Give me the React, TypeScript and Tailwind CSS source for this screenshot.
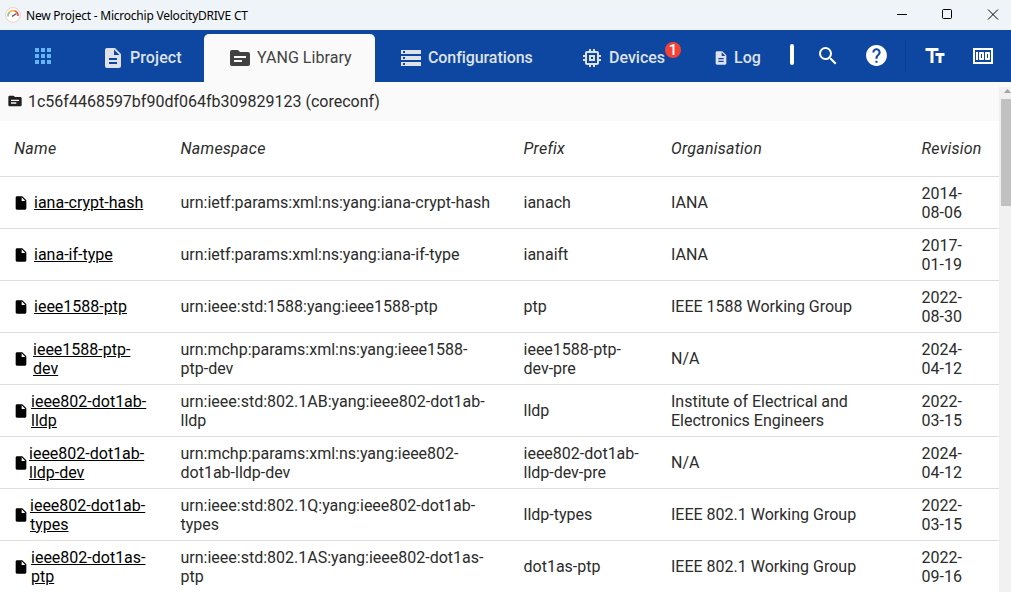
import React from "react";
import {
  MdApps,
  MdDescription,
  MdHelp,
  MdInsertDriveFile,
  MdMemory,
  MdMoney,
  MdSearch,
  MdSource,
  MdStorage,
  MdTextFields,
} from "react-icons/md";

type Module = {
  name: string[];
  gap: string;
  namespace: string[];
  prefix: string[];
  organisation: string[];
  revision: string[];
};

const modules: Module[] = [
  { name: ["iana-crypt-hash"], gap: "w-5", namespace: ["urn:ietf:params:xml:ns:yang:iana-crypt-hash"], prefix: ["ianach"], organisation: ["IANA"], revision: ["2014-", "08-06"] },
  { name: ["iana-if-type"], gap: "w-5", namespace: ["urn:ietf:params:xml:ns:yang:iana-if-type"], prefix: ["ianaift"], organisation: ["IANA"], revision: ["2017-", "01-19"] },
  { name: ["ieee1588-ptp"], gap: "w-5", namespace: ["urn:ieee:std:1588:yang:ieee1588-ptp"], prefix: ["ptp"], organisation: ["IEEE 1588 Working Group"], revision: ["2022-", "08-30"] },
  { name: ["ieee1588-ptp-", "dev"], gap: "w-[19px]", namespace: ["urn:mchp:params:xml:ns:yang:ieee1588-", "ptp-dev"], prefix: ["ieee1588-ptp-", "dev-pre"], organisation: ["N/A"], revision: ["2024-", "04-12"] },
  { name: ["ieee802-dot1ab-", "lldp"], gap: "w-[17px]", namespace: ["urn:ieee:std:802.1AB:yang:ieee802-dot1ab-", "lldp"], prefix: ["lldp"], organisation: ["Institute of Electrical and", "Electronics Engineers"], revision: ["2022-", "03-15"] },
  { name: ["ieee802-dot1ab-", "lldp-dev"], gap: "w-[15px]", namespace: ["urn:mchp:params:xml:ns:yang:ieee802-", "dot1ab-lldp-dev"], prefix: ["ieee802-dot1ab-", "lldp-dev-pre"], organisation: ["N/A"], revision: ["2024-", "04-12"] },
  { name: ["ieee802-dot1ab-", "types"], gap: "w-4", namespace: ["urn:ieee:std:802.1Q:yang:ieee802-dot1ab-", "types"], prefix: ["lldp-types"], organisation: ["IEEE 802.1 Working Group"], revision: ["2022-", "03-15"] },
  { name: ["ieee802-dot1as-", "ptp"], gap: "w-[17px]", namespace: ["urn:ieee:std:802.1AS:yang:ieee802-dot1as-", "ptp"], prefix: ["dot1as-ptp"], organisation: ["IEEE 802.1 Working Group"], revision: ["2022-", "09-16"] },
];

const columns = "grid grid-cols-[166.5px_343px_147.5px_250.5px_77px] items-center pl-3.5";

function Lines({ lines, className = "" }: { lines: string[]; className?: string }) {
  return (
    <div className={className}>
      {lines.map((line) => (
        <div key={line} className="whitespace-nowrap">{line}</div>
      ))}
    </div>
  );
}

function GaugeLogo() {
  return (
    <svg className="size-4" viewBox="0 0 16 16" fill="none">
      <circle cx="8" cy="8" r="7.4" fill="#fff" stroke="#f3c4c1" strokeWidth="0.9" />
      <path d="M3 9.5A5 5 0 0 1 5 4.8" stroke="#9cc47a" strokeWidth="1.5" />
      <path d="M5 4.8A5 5 0 0 1 9.5 3.8" stroke="#f2b84b" strokeWidth="1.7" />
      <path d="M9.5 3.8A5 5 0 0 1 13 9" stroke="#e4573d" strokeWidth="1.7" />
      <path d="M7 9.5L11.5 6.5" stroke="#555" strokeWidth="1.4" />
    </svg>
  );
}

function TitleBar() {
  return (
    <header className="flex h-[30px] items-center bg-[#eff4f9] pl-[5px]">
      <GaugeLogo />
      <span className="ml-[5px] grow font-['Noto_Sans',sans-serif] text-[12px] tracking-[-0.23px] text-black">
        New Project - Microchip VelocityDRIVE CT
      </span>
      <svg className="h-[30px] w-[115px] shrink-0" viewBox="0 0 115 30" fill="none" stroke="#000" strokeWidth="1">
        <path d="M1 14.5h10" />
        <rect x="46.5" y="9.5" width="9" height="9" rx="1" />
        <path d="M92 9.5l10 10M102 9.5l-10 10" />
      </svg>
    </header>
  );
}

function NavBar() {
  return (
    <nav className="flex h-[52px] bg-[#0d47a1] text-[16px] font-medium text-[#dfe2e8]">
      <div className="flex w-[104px] items-center pl-[31px]">
        <MdApps className="size-6 text-[#64b5f6]" />
      </div>
      <div className="flex w-[100px] items-center pt-1">
        <MdDescription className="-ml-[3px] size-6" />
        <span className="ml-[5px] tracking-[0.1px]">Project</span>
      </div>
      <div className="mt-1 flex w-[171px] items-center rounded-t-[5px] bg-[#fafafa] pl-6 font-normal text-[#424242]">
        <MdSource className="size-6" />
        <span className="ml-[5px] tracking-[0.05px]">YANG Library</span>
      </div>
      <div className="flex w-[208px] items-center pt-1 pl-6">
        <MdStorage className="size-6" />
        <span className="ml-[5px] tracking-[-0.08px]">Configurations</span>
      </div>
      <div className="relative flex w-[131px] items-center pt-1">
        <MdMemory className="-ml-[3px] size-6" />
        <span className="ml-[5px]">Devices</span>
        <span className="absolute top-3 left-[82px] flex size-4 items-center justify-center rounded-full bg-[#f44336] text-[15px] text-white">
          1
        </span>
      </div>
      <div className="flex w-[76px] items-center pt-1">
        <MdDescription className="-ml-px size-4" />
        <span className="ml-[5px]">Log</span>
      </div>
      <div className="mt-[14px] h-[21px] w-1 rounded-sm bg-white" />
      <div className="flex grow items-center text-white">
        <MdSearch className="ml-[22px] size-6" />
        <MdHelp className="ml-6 size-[25px]" />
        <div className="ml-[16px] h-8 w-px bg-[#0a3f91]" />
        <MdTextFields className="ml-[17px] size-6" />
        <MdMoney className="ml-6 size-6" />
      </div>
    </nav>
  );
}

export default function App() {
  return (
    <div className="flex h-[592px] w-[1011px] flex-col overflow-hidden bg-white font-[Roboto,sans-serif] text-[16px] leading-[19px] text-[#2b2b2b]">
      <TitleBar />
      <NavBar />
      <div className="flex min-h-0 grow bg-[#fafafa]">
        <main className="w-[999px] overflow-hidden">
          <div className="flex h-[39px] items-center pl-[7px]">
            <MdSource className="size-4 text-[#212121]" />
            <span className="ml-[5px]">1c56f4468597bf90df064fb309829123 (coreconf)</span>
          </div>
          <div className="bg-white">
            <div className={`${columns} h-14 border-b border-[#dedede] tracking-[0.25px] italic`}>
              <span>Name</span>
              <span>Namespace</span>
              <span>Prefix</span>
              <span>Organisation</span>
              <span>Revision</span>
            </div>
            {modules.map((m) => (
              <div key={m.name.join("")} className={`${columns} h-[52px] border-b border-[#dedede] pt-px`}>
                <div className="flex items-center text-black">
                  <div className={`flex shrink-0 ${m.gap}`}>
                    <MdInsertDriveFile className="-ml-px size-4 shrink-0" />
                  </div>
                  <Lines lines={m.name} className="underline" />
                </div>
                <Lines lines={m.namespace} />
                <Lines lines={m.prefix} />
                <Lines lines={m.organisation} />
                <Lines lines={m.revision} />
              </div>
            ))}
          </div>
        </main>
        <aside className="mt-[5px] flex w-3 flex-col items-end bg-[#f1f1f1]">
          <svg className="h-3 w-2.5" viewBox="0 0 10 12">
            <path d="M3 6L6.5 2L10 6Z" fill="#a3a3a3" />
          </svg>
          <div className="h-[107px] w-2.5 bg-[#c1c1c1]" />
        </aside>
      </div>
    </div>
  );
}
